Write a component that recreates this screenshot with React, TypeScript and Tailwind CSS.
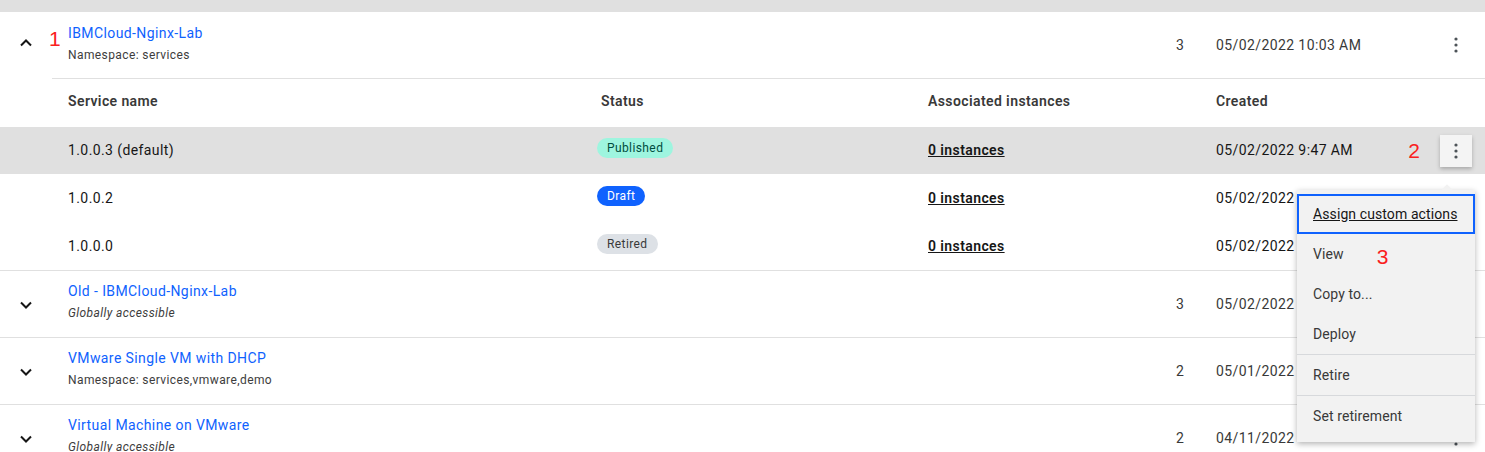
import React from 'react';

const font = { fontFamily: 'Roboto, "Noto Sans", sans-serif' };

function Chevron({ up }: { up?: boolean }) {
  return (
    <svg width="12" height="8" viewBox="0 0 12 8" className={up ? 'rotate-180' : ''}>
      <path d="M1 1.5 L6 6.5 L11 1.5" fill="none" stroke="#161616" strokeWidth="2" />
    </svg>
  );
}

function Kebab() {
  return (
    <svg width="4" height="16" viewBox="0 0 4 16">
      <circle cx="2" cy="2" r="1.6" fill="#4d5358" />
      <circle cx="2" cy="8" r="1.6" fill="#4d5358" />
      <circle cx="2" cy="14" r="1.6" fill="#4d5358" />
    </svg>
  );
}

function Marker({ n, className }: { n: string; className?: string }) {
  return (
    <span
      className={`text-[21px] leading-none tracking-normal text-[#fa2020] ${className || ''}`}
      style={{ fontFamily: '"Liberation Sans", Arial, sans-serif' }}
    >
      {n}
    </span>
  );
}

interface Group {
  name: string;
  sub: string;
  italic?: boolean;
  count: number;
  created: string;
}

// the menu covers the time part of these dates
const groups: Group[] = [
  { name: 'Old - IBMCloud-Nginx-Lab', sub: 'Globally accessible', italic: true, count: 3, created: '05/02/2022' },
  { name: 'VMware Single VM with DHCP', sub: 'Namespace: services,vmware,demo', count: 2, created: '05/01/2022' },
  { name: 'Virtual Machine on VMware', sub: 'Globally accessible', italic: true, count: 2, created: '04/11/2022' },
];

const versions = [
  { v: '1.0.0.3 (default)', tag: 'Published', tagCls: 'bg-[#9ef5df] text-[#004d40]', active: true, h: 'h-[47px]', created: '05/02/2022 9:47 AM' },
  { v: '1.0.0.2', tag: 'Draft', tagCls: 'bg-[#0f62fe] text-white', h: 'h-[48px]', created: '05/02/2022' },
  { v: '1.0.0.0', tag: 'Retired', tagCls: 'bg-[#dde1e6] text-[#393939]', h: 'h-[48px]', created: '05/02/2022' },
];

function GroupRow({ g }: { g: Group }) {
  return (
    <div className="flex h-[67px] items-center border-b border-[#e0e0e0]">
      <div className="flex w-[52px] justify-center pt-[2px]">
        <Chevron />
      </div>
      <div className="flex flex-1 flex-col -mt-[5px] pl-4">
        <span className="text-[14px] leading-[18px] text-[#0f62fe]">{g.name}</span>
        <span className={`mt-[5px] text-[12px] leading-[16px] text-[#3d3d3d] ${g.italic ? 'italic' : ''}`}>{g.sub}</span>
      </div>
      <div className="w-[40px] text-[14px] text-[#393939]">{g.count}</div>
      <div className="w-[224px] text-[14px] text-[#393939]">{g.created}</div>
      <div className="flex w-[32px] justify-center"><Kebab /></div>
      <div className="w-[13px]" />
    </div>
  );
}

export default function App() {
  return (
    <div className="relative h-[452px] w-[1485px] overflow-hidden bg-white tracking-[0.4px]" style={font}>
      <div className="h-[12px] bg-[#e0e0e0]" />

      {/* expanded group */}
      <div className="flex h-[66px] items-center">
        <div className="relative flex w-[52px] justify-center -mt-[4px]">
          <Chevron up />
          <Marker n="1" className="absolute left-[49px] top-[-11px]" />
        </div>
        <div className="flex flex-1 flex-col -mt-[4px] pl-4">
          <span className="text-[14px] leading-[18px] text-[#0f62fe]">IBMCloud-Nginx-Lab</span>
          <span className="mt-[5px] text-[12px] leading-[16px] text-[#3d3d3d]">Namespace: services</span>
        </div>
        <div className="w-[40px] text-[14px] text-[#393939]">3</div>
        <div className="w-[224px] text-[14px] text-[#393939]">05/02/2022 10:03 AM</div>
        <div className="flex w-[32px] justify-center"><Kebab /></div>
        <div className="w-[13px]" />
      </div>

      <div className="ml-[52px] border-t border-[#e0e0e0]" />
      <div className="flex h-[48px] items-center pb-[4px] text-[14px] font-semibold text-[#393939]">
        <div className="w-[597px] pl-[68px]">Service name</div>
        <div className="w-[331px] pl-[4px]">Status</div>
        <div className="w-[288px]">Associated instances</div>
        <div>Created</div>
      </div>

      {versions.map((r) => (
        <div key={r.v} className={`flex ${r.h} items-center text-[14px] text-[#161616] ${r.active ? 'bg-[#e0e0e0]' : ''}`}>
          <div className="w-[597px] pl-[68px]">{r.v}</div>
          <div className="w-[331px]">
            <span className={`relative -top-[3px] inline-flex h-[20px] items-center rounded-full px-[10px] text-[12px] ${r.tagCls}`}>{r.tag}</span>
          </div>
          <div className="w-[288px] font-semibold underline">0 instances</div>
          <div className="flex-1">{r.created}</div>
          {r.active && (
            <div className="mr-[13px] flex items-center">
              <Marker n="2" className="mr-[20px]" />
              <div className="flex h-[32px] w-[32px] items-center justify-center bg-[#f4f4f4] shadow-[0_2px_4px_rgba(0,0,0,0.25)]">
                <Kebab />
              </div>
            </div>
          )}
        </div>
      ))}

      <div className="border-t border-[#e0e0e0]" />
      {groups.map((g) => (
        <GroupRow key={g.name} g={g} />
      ))}

      {/* overflow menu */}
      <div className="absolute left-[1297px] top-[190px] w-[178px] bg-[#f2f2f2] pb-[6px] pt-[4px] text-[14px] tracking-[0.1px] text-[#393939] shadow-[0_2px_6px_rgba(0,0,0,0.3)]">
        <div className="absolute -top-[4px] left-[146px] h-[8px] w-[8px] rotate-45 bg-[#f2f2f2]" />
        <div className="relative flex h-[40px] items-center border-2 border-[#0f62fe] pl-[14px] text-[#161616] underline">
          Assign custom actions
        </div>
        <div className="flex h-[40px] items-center pl-4">
          <span>View</span>
          <Marker n="3" className="ml-[33px] mt-[4px]" />
        </div>
        <div className="flex h-[40px] items-center pl-4">Copy to...</div>
        <div className="flex h-[40px] items-center pl-4">Deploy</div>
        <div className="h-px bg-[#d7d9dc]" />
        <div className="flex h-[40px] items-center pl-4">Retire</div>
        <div className="h-px bg-[#d7d9dc]" />
        <div className="flex h-[40px] items-center pl-4">Set retirement</div>
      </div>
    </div>
  );
}
